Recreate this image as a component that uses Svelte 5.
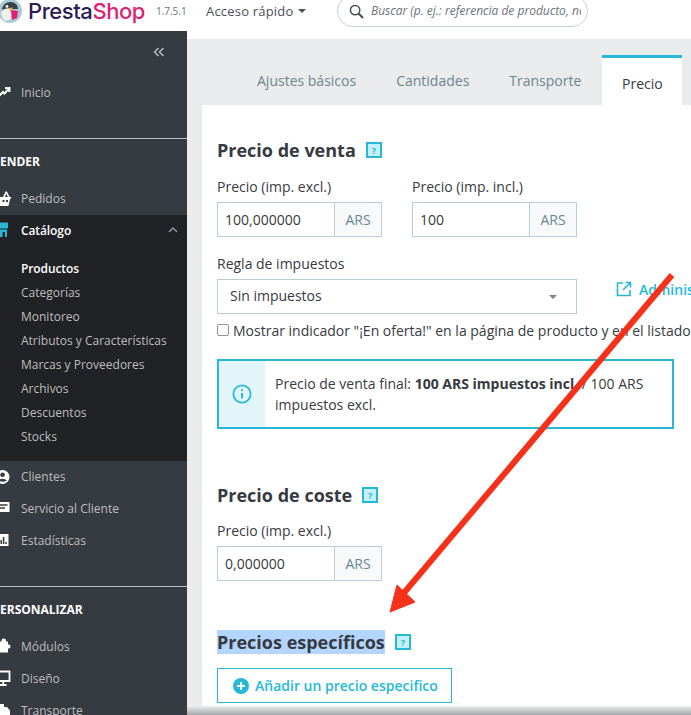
<script>
	const catalog = [
		'Productos',
		'Categorías',
		'Monitoreo',
		'Atributos y Características',
		'Marcas y Proveedores',
		'Archivos',
		'Descuentos',
		'Stocks'
	];
	const tabs = ['Ajustes básicos', 'Cantidades', 'Transporte'];
</script>

{#snippet help()}
	<span class="help">?</span>
{/snippet}

{#snippet money(value)}
	<div class="money">
		<span class="value">{value}</span>
		<span class="unit">ARS</span>
	</div>
{/snippet}

<div class="page">
	<header class="topbar">
		<div class="logo">
			<svg class="bird" width="24" height="24" viewBox="0 0 24 24">
				<circle cx="12" cy="12" r="12" fill="#a9cbd8" />
				<path d="M4 11 Q5 3 13 3 Q20 4 20 10 L15 10 Q9 8 4 11 Z" fill="#3c4149" />
				<path d="M3 14 Q5 9 11 10 Q14 14 13 20 Q8 23 5 20 Z" fill="#f4f1ea" />
				<path d="M13 11 L20 12 L19 19 L14 21 Z" fill="#df1f72" />
				<path d="M10 9 L15 8.5 L13 12 Z" fill="#efb23c" />
				<circle cx="9" cy="7.5" r="1.4" fill="#f4f1ea" />
			</svg>
			<span class="brand">Presta<span class="shop">Shop</span></span>
			<span class="version">1.7.5.1</span>
		</div>
		<div class="quick">Acceso rápido <i class="caret"></i></div>
		<div class="search">
			<svg width="15" height="15" viewBox="0 0 16 16" fill="none" stroke="#4b5157" stroke-width="1.6">
				<circle cx="6.5" cy="6.5" r="5" />
				<path d="M10.2 10.2 L15 15" stroke-width="2.2" />
			</svg>
			<span class="search-text">Buscar (p. ej.: referencia de producto, nombre</span>
		</div>
	</header>

	<div class="body">
		<aside class="sidebar">
			<div class="collapse">
				<svg width="12" height="10" viewBox="0 0 12 10" fill="none" stroke="#bcc3c8" stroke-width="1.4">
					<path d="M5.5 1 L1.5 5 L5.5 9 M10.5 1 L6.5 5 L10.5 9" />
				</svg>
			</div>

			<a class="item inicio">
				<svg class="icon" viewBox="0 0 21 16" fill="none" stroke="#fff" stroke-width="2">
					<path d="M-2 13 L3 8 L4.5 9.5 L9 4.5 M5 4 H9.4 V8" />
				</svg>
				Inicio
			</a>

			<div class="section">ENDER</div>
			<a class="item pedidos">
				<svg class="icon" viewBox="0 0 21 16" fill="#fff">
					<path d="M3 6 L5.5 0.5 H7 L9.5 6 H11 V8 H10 L8.5 15 H-1 V6 Z M5 6 H7.8 L6.3 2.6 Z M2.5 9 V11 H4.5 V9 Z M6 9 V11 H8 V9 Z" fill-rule="evenodd" />
				</svg>
				Pedidos
			</a>

			<div class="group">
				<a class="item active">
					<svg class="icon" viewBox="0 0 21 16" fill="#25b9d7">
						<path d="M-1 0.5 H8 V6.5 H-1 Z M0 7.5 H7 V15 H5 V10 H2.5 V15 H0 Z" />
					</svg>
					Catálogo
					<svg class="chev" width="10" height="6" viewBox="0 0 10 6" fill="none" stroke="#8d9499" stroke-width="1.5">
						<path d="M1 5 L5 1 L9 5" />
					</svg>
				</a>
				<ul>
					{#each catalog as name, i}
						<li class:current={i === 0}>{name}</li>
					{/each}
				</ul>
			</div>

			<a class="item first">
				<svg class="icon" viewBox="0 0 21 16" fill="#fff">
					<path d="M2.5 1 A7 7 0 1 1 2.4 1 Z M2.5 3.5 A2.3 2.3 0 1 0 2.6 3.5 Z M-2 11.5 Q2.5 8 7 11.5 Q2.5 14 -2 11.5 Z" fill-rule="evenodd" />
				</svg>
				Clientes
			</a>
			<a class="item">
				<svg class="icon" viewBox="0 0 21 16" fill="#fff">
					<path d="M-2 2 H9.5 V12 H-2 Z" />
					<path d="M0 5 H7.5 M0 8 H5" stroke="#363a41" stroke-width="1.4" />
				</svg>
				Servicio al Cliente
			</a>
			<a class="item">
				<svg class="icon" viewBox="0 0 21 16" fill="#fff">
					<path d="M-2 2 H8.5 V14 H-2 Z" />
					<path d="M1.2 12 V8 M3.6 12 V5 M6 12 V10" stroke="#363a41" stroke-width="1.5" />
				</svg>
				Estadísticas
			</a>

			<div class="section second">ERSONALIZAR</div>
			<a class="item">
				<svg class="icon" viewBox="0 0 21 16" fill="#fff">
					<path d="M-2 3.5 H1.5 Q1 0.5 3.7 0.5 Q6.4 0.5 6 3.5 H8 V6.5 Q10.5 6 10.5 8.5 Q10.5 11 8 10.5 V14.5 H-2 Z" />
				</svg>
				Módulos
			</a>
			<a class="item">
				<svg class="icon" viewBox="0 0 21 16" fill="none" stroke="#fff" stroke-width="1.8">
					<path d="M-3 1.5 H9.5 V11 H-3 Z M0 15 H6.5 M3.2 11 V15" />
				</svg>
				Diseño
			</a>
			<a class="item">
				<svg class="icon" viewBox="0 0 21 16" fill="#fff">
					<path d="M-2 2 H4 V5 H7 L10 8.5 V13 H-2 Z" />
				</svg>
				Transporte
			</a>
		</aside>

		<main class="content">
			<nav class="tabs">
				{#each tabs as tab}
					<span class="tab">{tab}</span>
				{/each}
				<span class="tab selected">Precio</span>
			</nav>

			<div class="card">
				<h2>Precio de venta {@render help()}</h2>
				<div class="prices">
					<div class="field">
						<label>Precio (imp. excl.)</label>
						{@render money('100,000000')}
					</div>
					<div class="field">
						<label>Precio (imp. incl.)</label>
						{@render money('100')}
					</div>
				</div>

				<div class="tax-label">Regla de impuestos</div>
				<div class="tax-row">
					<div class="select">Sin impuestos <i class="caret small"></i></div>
					<span class="manage">
						<svg width="16" height="16" viewBox="0 0 16 16" fill="none" stroke="#25b9d7" stroke-width="1.6">
							<path d="M7 2 H1.5 V14.5 H14 V9 M9.5 1.5 H14.5 V6.5 M14.5 1.5 L7 9" />
						</svg>
						Administrar
					</span>
				</div>
				<div class="check">
					<span class="box"></span>
					<span class="check-text">Mostrar indicador "¡En oferta!" en la página de producto y en el listado</span>
				</div>

				<div class="info">
					<div class="info-side">
						<svg width="20" height="20" viewBox="0 0 20 20" fill="none" stroke="#25b9d7" stroke-width="1.8">
							<circle cx="10" cy="10" r="8.6" />
							<path d="M10 9 V14.5" stroke-width="2" />
							<path d="M10 5.2 V7" stroke-width="2" />
						</svg>
					</div>
					<p>Precio de venta final: <b>100 ARS impuestos incl.</b> / 100 ARS impuestos excl.</p>
				</div>

				<h2 class="cost">Precio de coste {@render help()}</h2>
				<div class="field">
					<label>Precio (imp. excl.)</label>
					{@render money('0,000000')}
				</div>

				<h2 class="specific"><span class="selection">Precios específicos</span> {@render help()}</h2>
				<div class="add">
					<svg width="16" height="16" viewBox="0 0 16 16">
						<circle cx="8" cy="8" r="8" fill="#25b9d7" />
						<path d="M8 4 V12 M4 8 H12" stroke="#fff" stroke-width="2" />
					</svg>
					Añadir un precio especifico
				</div>
			</div>
		</main>
	</div>

	<svg class="arrow" width="691" height="715" viewBox="0 0 691 715">
		<path d="M672 275 L403 594" stroke="#f5311a" stroke-width="6" fill="none" />
		<path d="M390 612 L397 585 L415 602 Z" fill="#f5311a" stroke="#f5311a" stroke-width="1" />
	</svg>
</div>

<style>
	:global(body) {
		margin: 0;
		background: #fff;
	}

	.page {
		position: relative;
		width: 691px;
		height: 715px;
		overflow: hidden;
		font-family: "Open Sans", sans-serif;
		font-size: 14px;
		color: #363a41;
	}

	.topbar {
		display: flex;
		align-items: center;
		height: 31px;
		padding-bottom: 9px;
		box-sizing: border-box;
		background: #fff;
		line-height: 18px;
	}

	.logo {
		display: flex;
		align-items: center;
		width: 208px;
		flex: none;
		margin-left: -2px;
	}

	.bird {
		flex: none;
		margin-right: 6px;
	}

	.brand {
		font-family: Inter, sans-serif;
		font-size: 22px;
		line-height: 22px;
		font-weight: 500;
		letter-spacing: -0.45px;
		color: #2c1d52;
	}

	.shop {
		color: #df1f72;
	}

	.version {
		margin-left: 11px;
		font-size: 10px;
		color: #6c7379;
	}

	.quick {
		font-size: 13px;
		letter-spacing: 0.2px;
		color: #4b5157;
		width: 131px;
		flex: none;
		display: flex;
		align-items: center;
		gap: 4px;
	}

	.caret {
		display: inline-block;
		border-left: 4px solid transparent;
		border-right: 4px solid transparent;
		border-top: 4px solid #4b5157;
	}

	.search {
		flex: none;
		width: 251px;
		height: 32px;
		border: 1px solid #c9d0d5;
		border-radius: 16px;
		display: flex;
		align-items: center;
		gap: 7px;
		padding-left: 11px;
		box-sizing: border-box;
		overflow: hidden;
	}

	.search svg {
		flex: none;
	}

	.search-text {
		font-size: 12px;
		font-style: italic;
		color: #6c7379;
		white-space: nowrap;
		overflow: hidden;
		width: 210px;
		flex: none;
	}

	.body {
		display: flex;
		height: 684px;
	}

	.sidebar {
		width: 187px;
		flex: none;
		background: #363a41;
		color: #bebebe;
	}

	.collapse {
		display: flex;
		justify-content: flex-end;
		padding: 16px 22px 0 0;
		height: 45px;
		box-sizing: border-box;
	}

	.item {
		display: flex;
		align-items: center;
		height: 32px;
		font-size: 12px;
		color: #bebebe;
		position: relative;
	}

	.icon {
		flex: none;
		width: 21px;
		height: 16px;
		overflow: visible;
	}

	.inicio {
		margin-bottom: 30px;
	}

	.pedidos {
		height: 33px;
	}

	.section {
		height: 44px;
		box-sizing: border-box;
		padding-top: 14px;
		border-top: 1px solid #b9c2c8;
		font-size: 12px;
		font-weight: 700;
		line-height: 17px;
		color: #fff;
	}

	.section.second {
		margin-top: 30px;
	}

	.group {
		background: #202226;
		padding-bottom: 12px;
	}

	.item.active {
		height: 30px;
		color: #fff;
		font-weight: 600;
		letter-spacing: -0.1px;
	}

	.chev {
		position: absolute;
		right: 9px;
		top: 12px;
	}

	ul {
		list-style: none;
		margin: 0;
		padding: 12px 0 0 21px;
	}

	li {
		height: 24px;
		line-height: 24px;
		font-size: 12px;
		color: #bebebe;
	}

	li.current {
		color: #fff;
		font-weight: 600;
		letter-spacing: -0.1px;
	}

	.first {
		height: 31px;
	}

	.content {
		flex: 1;
		min-width: 0;
		background: #eaebec;
		padding: 16px 0 0 15px;
		margin-top: 8px;
		position: relative;
		overflow: hidden;
	}

	.content::after {
		content: '';
		position: absolute;
		left: 0;
		right: 0;
		bottom: 0;
		height: 9px;
		background: linear-gradient(#eceded, #a4a6a8);
	}

	.tabs {
		display: flex;
		height: 50px;
		padding-left: 55px;
		box-sizing: border-box;
		gap: 40px;
		align-items: center;
	}

	.tab {
		padding-top: 1px;
		font-size: 14px;
		color: #6c868e;
		white-space: nowrap;
	}

	.tab.selected {
		align-self: stretch;
		display: flex;
		align-items: center;
		justify-content: center;
		box-sizing: border-box;
		padding-top: 4px;
		background: #fff;
		border-top: 3px solid #25b9d7;
		width: 80px;
		color: #363a41;
		margin-left: -19px;
		flex: none;
	}

	.card {
		background: #fff;
		height: 610px;
		padding: 33px 0 0 15px;
		box-sizing: border-box;
		overflow: hidden;
	}

	h2 {
		margin: 0;
		font-size: 18px;
		line-height: 24px;
		font-weight: 700;
		color: #363a41;
		display: flex;
		align-items: center;
		gap: 10px;
	}

	.help {
		display: inline-flex;
		align-items: center;
		justify-content: center;
		width: 16px;
		height: 16px;
		box-sizing: border-box;
		border: 2px solid #25b9d7;
		background: #c5f0f8;
		font-size: 9px;
		font-weight: 700;
		color: #25b9d7;
		line-height: 1;
	}

	.prices {
		display: flex;
		gap: 30px;
		margin-top: 16px;
	}

	.field label {
		display: block;
		font-size: 14px;
		line-height: 18px;
		margin-bottom: 6px;
	}

	.money {
		display: flex;
		width: 165px;
		height: 35px;
		box-sizing: border-box;
		border: 1px solid #bbcdd2;
	}

	.value {
		flex: 1;
		padding-left: 7px;
		line-height: 33px;
	}

	.unit {
		width: 46px;
		text-align: center;
		line-height: 33px;
		color: #6c868e;
		background: #f7f9fa;
		border-left: 1px solid #bbcdd2;
	}

	.tax-label {
		margin-top: 18px;
		line-height: 18px;
		margin-bottom: 6px;
	}

	.tax-row {
		display: flex;
		align-items: flex-start;
	}

	.select {
		position: relative;
		flex: none;
		width: 360px;
		height: 35px;
		box-sizing: border-box;
		border: 1px solid #bbcdd2;
		padding-left: 12px;
		line-height: 32px;
	}

	.caret.small {
		position: absolute;
		right: 19px;
		top: 15px;
		border-top-color: #6c868e;
	}

	.manage {
		display: flex;
		align-items: center;
		gap: 7px;
		height: 20px;
		margin-left: 39px;
		font-weight: 600;
		color: #25b9d7;
		white-space: nowrap;
	}

	.check {
		display: flex;
		align-items: center;
		gap: 4px;
		margin-top: 6px;
		height: 20px;
		white-space: nowrap;
	}

	.box {
		flex: none;
		width: 10px;
		height: 10px;
		border: 1px solid #8d9499;
		border-radius: 2px;
	}

	.info {
		display: flex;
		margin-top: 19px;
		width: 457px;
		height: 70px;
		box-sizing: border-box;
		border: 2px solid #25b9d7;
	}

	.info-side {
		width: 46px;
		flex: none;
		background: #e2f6fa;
		display: flex;
		align-items: center;
		justify-content: center;
	}

	.info p {
		margin: 0;
		padding: 12px 20px 0 10px;
		line-height: 21px;
	}

	.cost {
		margin-top: 54px;
		margin-bottom: 15px;
	}

	.specific {
		margin-top: 49px;
	}

	.selection {
		background: #b4d5fe;
	}

	.add {
		display: flex;
		align-items: center;
		gap: 6px;
		margin-top: 14px;
		padding-left: 15px;
		width: 235px;
		height: 35px;
		box-sizing: border-box;
		border: 1px solid #25b9d7;
		font-weight: 600;
		color: #25b9d7;
	}

	.arrow {
		position: absolute;
		left: 0;
		top: 0;
		pointer-events: none;
	}
</style>
